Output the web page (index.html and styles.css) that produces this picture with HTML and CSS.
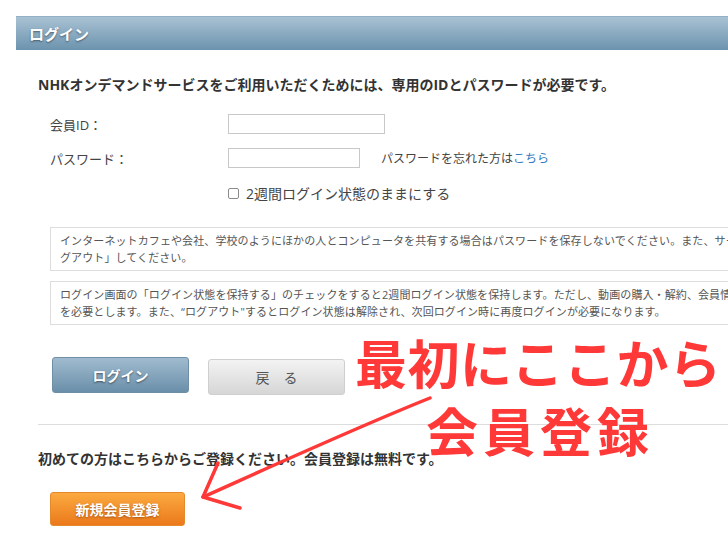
FILE: index.html
```html
<!DOCTYPE html>
<html lang="ja">
<head>
  <meta charset="UTF-8">
  <meta name="viewport" content="width=device-width, initial-scale=1.0">
  <title>ログイン</title>
  <link rel="stylesheet" href="styles.css">
</head>
<body>
  <div class="page">
    <div class="panel">
      <h1 class="panel__title">ログイン</h1>
      <div class="panel__body">
        <p class="lead">NHKオンデマンドサービスをご利用いただくためには、専用のIDとパスワードが必要です。</p>

        <div class="form">
          <div class="form__row">
            <label class="form__label" for="member-id">会員ID：</label>
            <input class="form__input form__input--id" id="member-id" type="text">
          </div>
          <div class="form__row">
            <label class="form__label" for="member-pw">パスワード：</label>
            <input class="form__input form__input--pw" id="member-pw" type="password">
            <span class="form__forgot">パスワードを忘れた方は<a href="#">こちら</a></span>
          </div>
          <div class="form__row form__row--check">
            <label class="form__check"><input class="form__checkbox" type="checkbox">2週間ログイン状態のままにする</label>
          </div>
        </div>

        <div class="notice">
          インターネットカフェや会社、学校のようにほかの人とコンピュータを共有する場合はパスワードを保存しないでください。また、サービスのご利用後は必ず「ロ<br>グアウト」してください。
        </div>
        <div class="notice">
          ログイン画面の「ログイン状態を保持する」のチェックをすると2週間ログイン状態を保持します。ただし、動画の購入・解約、会員情報の変更時はパスワード<br>を必要とします。また、“ログアウト"するとログイン状態は解除され、次回ログイン時に再度ログインが必要になります。
        </div>

        <div class="actions">
          <a class="btn btn--login" href="#">ログイン</a>
          <a class="btn btn--back" href="#">戻　る</a>
        </div>

        <hr class="divider">

        <p class="lead">初めての方はこちらからご登録ください。会員登録は無料です。</p>
        <a class="btn btn--register" href="#">新規会員登録</a>
      </div>
    </div>

    <!-- hand-written annotation over the screenshot -->
    <div class="memo memo--1">最初にここから</div>
    <div class="memo memo--2">会員登録</div>
    <svg class="memo__arrow" width="728" height="546" viewBox="0 0 728 546">
      <g fill="none" stroke="#ff3838" stroke-width="3.5" stroke-linecap="round" stroke-linejoin="round">
        <path d="M430 398 C 360 426, 290 458, 203 497"/>
        <path d="M218 463 L 203 497 L 240 508"/>
      </g>
    </svg>
  </div>
</body>
</html>
```

FILE: styles.css
```css
*,
*::after,
*::before {
  padding: 0;
  margin: 0;
  box-sizing: border-box;
}

:root {
  --text: #333;
  --link: #2f7cc2;
  --memo-red: #ff3838;
}

html,
body {
  overflow: hidden;
}

body {
  background-color: #fff;
  color: var(--text);
  font-family: "Open Sans", "Noto Sans CJK JP", sans-serif;
}

.page {
  position: relative;
  width: 728px;
  height: 546px;
  padding: 16px 0 0 16px;
}

.panel {
  width: 760px;
}

.panel__title {
  height: 34px;
  padding-left: 13px;
  font-size: 15px;
  line-height: 34px;
  font-weight: 700;
  color: #fff;
  text-shadow: 0 1px 2px rgba(0, 0, 0, 0.45);
  background-image: linear-gradient(to bottom, #a9c2d3, #6c93ae);
  border-top: 1px solid #93b2c7;
}

.panel__body {
  padding: 25px 0 0 22px;
}

.lead {
  font-size: 14px;
  line-height: 20px;
  font-weight: 700;
  color: #333;
}

.form {
  margin-top: 19px;
  padding-left: 12px;
}

.form__row {
  display: flex;
  align-items: center;
  height: 20px;
  margin-bottom: 14px;
}

.form__row--check {
  height: 22px;
  padding-left: 178px;
}

.form__label {
  width: 178px;
  font-size: 13px;
  color: #444;
}

.form__input {
  height: 20px;
  border: 1px solid #c8c8c8;
  background-color: #fff;
}

.form__input--id {
  width: 157px;
}

.form__input--pw {
  width: 132px;
}

.form__forgot {
  margin-left: 21px;
  font-size: 12px;
  color: #444;
}

.form__forgot a {
  color: var(--link);
  text-decoration: none;
}

.form__check {
  display: flex;
  align-items: center;
  font-size: 14px;
  color: #444;
}

.form__checkbox {
  appearance: none;
  width: 11px;
  height: 11px;
  margin-right: 7px;
  border: 1px solid #8a8a8a;
  border-radius: 2px;
  background-color: #fff;
}

.notice {
  width: 720px;
  margin: 23px 0 0 12px;
  padding: 4px 9px;
  border: 1px solid #ddd;
  font-size: 11px;
  line-height: 17px;
  letter-spacing: 0.1px;
  color: #555;
  white-space: nowrap;
}

.notice + .notice {
  margin-top: 10px;
}

.actions {
  display: flex;
  gap: 19px;
  margin: 32px 0 0 14px;
}

.btn {
  display: flex;
  align-items: center;
  justify-content: center;
  width: 137px;
  height: 36px;
  border-radius: 3px;
  font-size: 14px;
  font-weight: 700;
  text-decoration: none;
}

.btn--login {
  color: #fff;
  text-shadow: 0 1px 2px rgba(0, 0, 0, 0.5);
  background-image: linear-gradient(to bottom, #a0bbcf, #6a8fa9);
  border: 1px solid #6f8fa6;
}

.btn--back {
  margin-top: 2px;
  color: #555;
  font-weight: 400;
  background-image: linear-gradient(to bottom, #f3f3f3, #d6d6d6);
  border: 1px solid #cfcfcf;
}

.btn--register {
  width: 135px;
  height: 34px;
  margin: 23px 0 0 12px;
  color: #fff;
  text-shadow: 0 1px 2px rgba(120, 50, 0, 0.6);
  background-image: linear-gradient(to bottom, #fbaa40, #eb791b);
  border: 1px solid #e58a2c;
}

.divider {
  margin: 29px 0 24px;
  border: 0;
  border-top: 1px solid #ddd;
}

.memo {
  position: absolute;
  font-family: "Noto Sans CJK JP", sans-serif;
  font-size: 52px;
  line-height: 52px;
  font-weight: 700;
  color: var(--memo-red);
  white-space: nowrap;
}

.memo--1 {
  left: 355px;
  top: 336px;
  letter-spacing: 0.5px;
}

.memo--2 {
  left: 426px;
  top: 404px;
  letter-spacing: 5px;
}

.memo__arrow {
  position: absolute;
  left: 0;
  top: 0;
  filter: blur(0.5px);
}
```
